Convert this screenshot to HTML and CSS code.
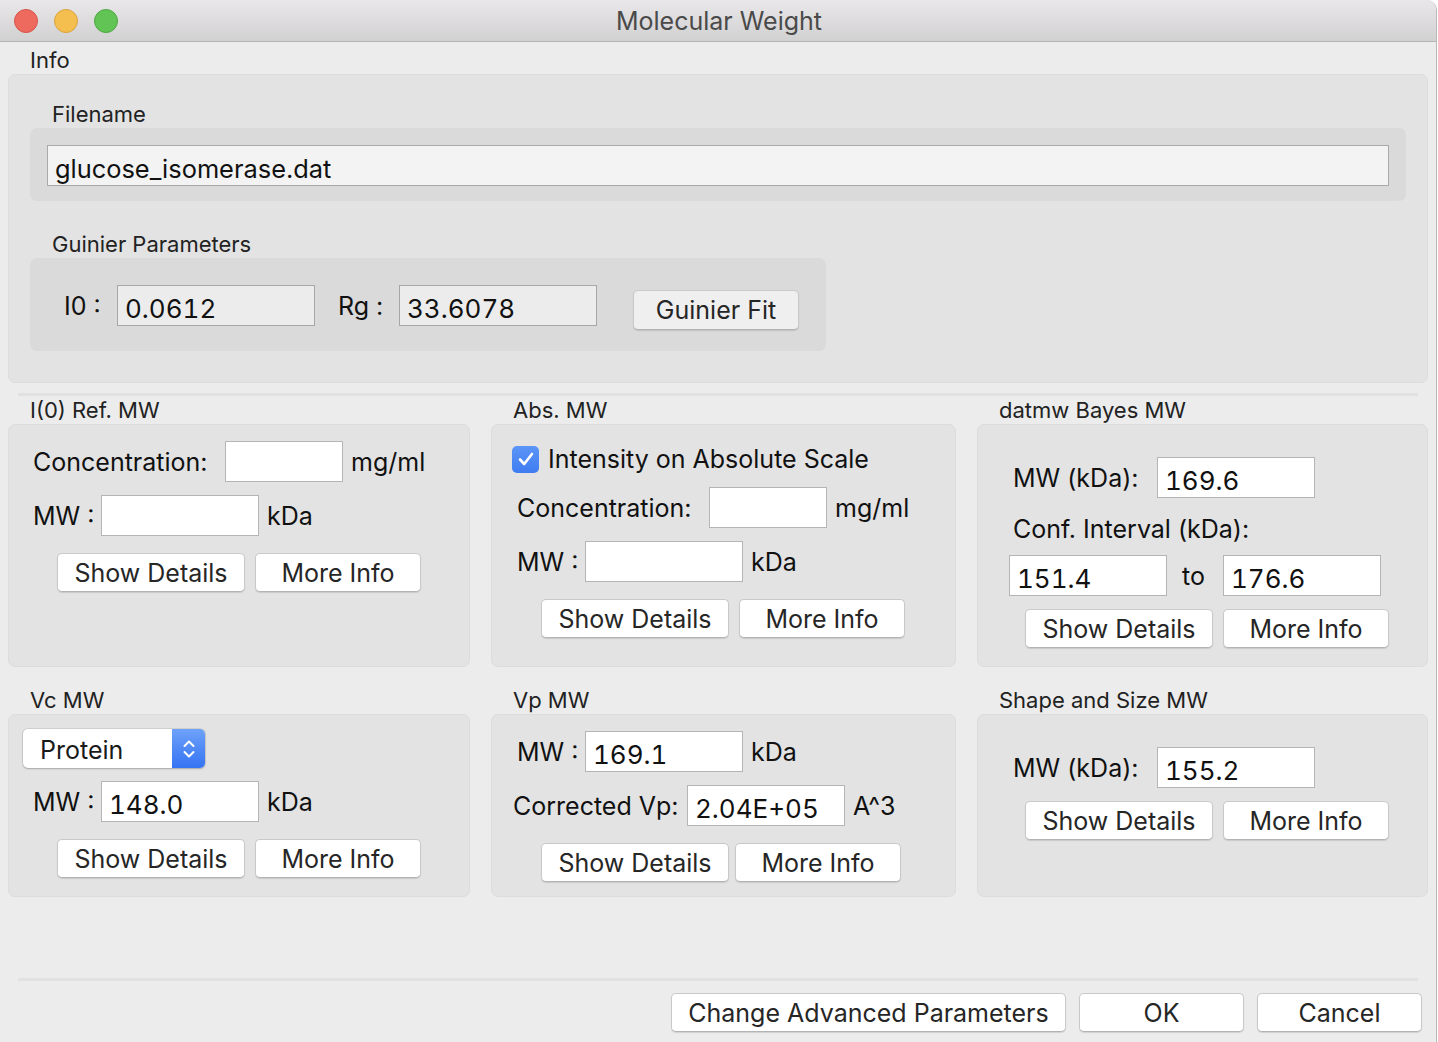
FILE: index.html
```html
<!DOCTYPE html>
<html>
<head>
<meta charset="utf-8">
<title>Molecular Weight</title>
<link rel="stylesheet" href="styles.css">
</head>
<body>
<div class="window">
  <div class="titlebar">
    <div class="lights">
      <span class="light red"></span>
      <span class="light yellow"></span>
      <span class="light green"></span>
    </div>
    <div class="wtitle">Molecular Weight</div>
  </div>
  <div class="content">
    <div class="gtitle top">Info</div>
    <div class="box info">
      <div class="stitle st-file">Filename</div>
      <div class="inner fname">
        <div class="field file">glucose_isomerase.dat</div>
      </div>
      <div class="stitle st-guin">Guinier Parameters</div>
      <div class="inner guinier">
        <span class="lbl w-i0">I0 :</span>
        <div class="field ro">0.0612</div>
        <span class="lbl w-rg">Rg :</span>
        <div class="field ro">33.6078</div>
        <button class="btn fit">Guinier Fit</button>
      </div>
    </div>
    <div class="sep"></div>
    <div class="grid">
      <div class="group">
        <div class="gtitle">I(0) Ref. MW</div>
        <div class="box b-top">
          <div class="row r-ref1"><span class="lbl w-conc">Concentration:</span><div class="field w118"></div><span class="unit">mg/ml</span></div>
          <div class="row r-ref2"><span class="lbl w-mw">MW :</span><div class="field w158"></div><span class="unit">kDa</span></div>
          <div class="row btns r-refb"><button class="btn sd">Show Details</button><button class="btn mi">More Info</button></div>
        </div>
      </div>
      <div class="group">
        <div class="gtitle">Abs. MW</div>
        <div class="box b-top">
          <div class="row r-chk"><span class="check"><svg width="18" height="16" viewBox="0 0 18 16"><path d="M3 8.5 L7.2 13 L15 3" fill="none" stroke="#fff" stroke-width="2.6" stroke-linecap="round" stroke-linejoin="round"/></svg></span><span class="lbl">Intensity on Absolute Scale</span></div>
          <div class="row r-abs1"><span class="lbl w-conc">Concentration:</span><div class="field w118"></div><span class="unit">mg/ml</span></div>
          <div class="row r-abs2"><span class="lbl w-mw">MW :</span><div class="field w158"></div><span class="unit">kDa</span></div>
          <div class="row btns r-absb"><button class="btn sd">Show Details</button><button class="btn mi">More Info</button></div>
        </div>
      </div>
      <div class="group">
        <div class="gtitle">datmw Bayes MW</div>
        <div class="box b-top">
          <div class="row r-bay1"><span class="lbl w-mwk">MW (kDa):</span><div class="field w158">169.6</div></div>
          <div class="row r-bay2"><span class="lbl">Conf. Interval (kDa):</span></div>
          <div class="row r-bay3"><div class="field w158">151.4</div><span class="lbl w-to">to</span><div class="field w158">176.6</div></div>
          <div class="row btns r-bayb"><button class="btn sd">Show Details</button><button class="btn mi">More Info</button></div>
        </div>
      </div>
      <div class="group">
        <div class="gtitle g2">Vc MW</div>
        <div class="box b-bot">
          <div class="row r-pop">
            <div class="popup"><span class="ptext">Protein</span><span class="parrow"><svg width="14" height="24" viewBox="0 0 14 24"><path d="M2.5 9 L7 4.5 L11.5 9 M2.5 15 L7 19.5 L11.5 15" fill="none" stroke="#fff" stroke-width="2" stroke-linecap="round" stroke-linejoin="round"/></svg></span></div>
          </div>
          <div class="row r-vc2"><span class="lbl w-mw">MW :</span><div class="field w158">148.0</div><span class="unit">kDa</span></div>
          <div class="row btns r-vcb"><button class="btn sd">Show Details</button><button class="btn mi">More Info</button></div>
        </div>
      </div>
      <div class="group">
        <div class="gtitle g2">Vp MW</div>
        <div class="box b-bot">
          <div class="row r-vp1"><span class="lbl w-mw">MW :</span><div class="field w158">169.1</div><span class="unit">kDa</span></div>
          <div class="row r-vp2"><span class="lbl w-cvp">Corrected Vp:</span><div class="field w158">2.04E+05</div><span class="unit">A^3</span></div>
          <div class="row btns r-vpb"><button class="btn sd">Show Details</button><button class="btn mi tight">More Info</button></div>
        </div>
      </div>
      <div class="group">
        <div class="gtitle g2">Shape and Size MW</div>
        <div class="box b-bot">
          <div class="row r-bay1"><span class="lbl w-mwk">MW (kDa):</span><div class="field w158">155.2</div></div>
          <div class="row btns r-shb"><button class="btn sd">Show Details</button><button class="btn mi">More Info</button></div>
        </div>
      </div>
    </div>
    <div class="sep sep2"></div>
    <div class="footer">
      <button class="btn adv">Change Advanced Parameters</button>
      <button class="btn ok">OK</button>
      <button class="btn ok">Cancel</button>
    </div>
  </div>
</div>
</body>
</html>
```

FILE: styles.css
```css
* { box-sizing: border-box; }
html, body { margin: 0; padding: 0; background: #ffffff; }
body {
  font-family: Inter, "Liberation Sans", sans-serif;
  color: #1a1a1a;
  width: 1438px;
  height: 1042px;
  overflow: hidden;
}
.window {
  width: 1437px;
  height: 1042px;
  background: #ececec;
  border-right: 1px solid #b9b9b9;
  border-top-right-radius: 10px;
  overflow: hidden;
}
.titlebar {
  height: 42px;
  background: linear-gradient(#e9e7e9, #d2d1d2);
  border-bottom: 1px solid #b4b4b4;
  display: flex;
  align-items: center;
  position: relative;
}
.lights { display: flex; gap: 16px; padding-left: 14px; }
.light {
  width: 24px; height: 24px; border-radius: 50%;
  display: block;
}
.red { background: #ee6a5f; border: 1px solid #d5544b; }
.yellow { background: #f5bf4f; border: 1px solid #d9a33f; }
.green { background: #61c454; border: 1px solid #4ea744; }
.wtitle {
  position: absolute; left: 0; right: 0; top: 0; bottom: 0;
  display: flex; align-items: center; justify-content: center;
  font-size: 25px; color: #4a4a4a;
  pointer-events: none;
  padding-top: 1px;
  padding-left: 2px;
}
.content { display: flex; flex-direction: column; }

.gtitle {
  height: 28px;
  line-height: 28px;
  padding-left: 22px;
  font-size: 22px;
  color: #222;
}
.gtitle.top {
  height: 32px;
  padding-top: 4px;
  padding-left: 30px;
}
.box {
  background: #e3e3e3;
  border: 1px solid #dcdcdc;
  border-radius: 7px;
}
.info {
  margin-left: 8px;
  width: 1420px;
  height: 309px;
  display: flex; flex-direction: column;
}
.stitle {
  font-size: 22px; color: #222;
  height: 28px; line-height: 28px;
  padding-left: 43px;
}
.st-file { margin-top: 25px; }
.st-guin { margin-top: 29px; }
.inner {
  background: #dadada;
  border-radius: 7px;
  margin-left: 21px;
}
.fname {
  width: 1376px;
  height: 73px;
  padding: 17px 0 0 17px;
}
.field {
  height: 41px;
  background: #fff;
  border: 1px solid #b5b5b5;
  font-size: 26px;
  line-height: 31px;
  padding-top: 7px;
  padding-left: 7px;
  color: #111;
  white-space: nowrap;
  font-feature-settings: "tnum" 1;
  flex-shrink: 0;
}
.file {
  width: 1342px;
  background: #f3f3f3;
  border-color: #a9a9a9;
  font-feature-settings: normal;
  font-size: 25.4px;
}
.guinier {
  width: 796px;
  height: 93px;
  display: flex;
  align-items: center;
  padding-left: 34px;
  padding-top: 2px;
}
.ro { width: 198px; background: #ececec; border-color: #a7a7a7; }
.lbl { font-size: 25px; color: #111; white-space: nowrap; flex-shrink: 0; }
.w-i0 { width: 53px; }
.w-rg { width: 61px; margin-left: 23px; }
.btn {
  font-family: inherit;
  font-size: 25px;
  color: #262626;
  background: #fff;
  border: 1px solid #c9c9c9;
  border-bottom-color: #b3b3b3;
  border-radius: 5px;
  box-shadow: 0 1px 1px rgba(0,0,0,0.12);
  height: 39px;
  padding: 0;
  margin: 0;
  display: flex; align-items: center; justify-content: center;
  flex-shrink: 0;
}
.fit { width: 166px; height: 40px; margin-left: 36px; background: #efefef; margin-top: 8px; }

.sep {
  height: 3px;
  background: #e1e1e1;
  margin: 10px 0 0 18px;
  width: 1400px;
}
.grid {
  display: grid;
  grid-template-columns: 462px 465px 451px;
  column-gap: 21px;
  margin-left: 8px;
}
.grid .gtitle.g2 { height: 47px; padding-top: 19px; }
.b-top { height: 243px; display: flex; flex-direction: column; }
.b-bot { height: 183px; display: flex; flex-direction: column; }
.row { display: flex; align-items: center; }
.unit { font-size: 25px; color: #111; margin-left: 8px; }
.w118 { width: 118px; }
.w158 { width: 158px; }
.w-conc { width: 192px; }
.w-mw { width: 68px; }
.w-mwk { width: 144px; }
.w-cvp { width: 174px; }
.w-to { width: 56px; padding-left: 15px; }
.btns { gap: 10px; }
.sd { width: 188px; }
.mi { width: 166px; }
.tight { margin-left: -4px; }

/* I(0) Ref */
.r-ref1 { margin: 16px 0 0 24px; }
.r-ref2 { margin: 13px 0 0 24px; }
.r-refb { margin: 17px 0 0 48px; }
/* Abs */
.r-chk { margin: 20px 0 0 20px; height: 28px; }
.check {
  width: 27px; height: 27px; border-radius: 5px;
  background: linear-gradient(#5b95f7, #3f7cf1);
  display: flex; align-items: center; justify-content: center;
  margin-right: 9px;
}
.r-abs1 { margin: 14px 0 0 25px; }
.r-abs2 { margin: 13px 0 0 25px; }
.r-absb { margin: 17px 0 0 49px; }
/* Bayes */
.r-bay1 { margin: 32px 0 0 35px; }
.r-bay2 { margin: 10px 0 0 35px; height: 41px; }
.r-bay3 { margin: 6px 0 0 31px; }
.r-bayb { margin: 13px 0 0 47px; }
/* Vc */
.r-pop { margin: 14px 0 0 14px; }
.popup {
  width: 182px; height: 39px;
  background: #fff;
  border-radius: 5px;
  box-shadow: 0 0 0 1px rgba(0,0,0,0.08), 0 1px 2px rgba(0,0,0,0.2);
  display: flex;
  overflow: hidden;
}
.ptext { flex: 1; font-size: 25px; color: #1a1a1a; line-height: 39px; padding-left: 17px; padding-top: 2px; }
.parrow {
  width: 33px;
  background: linear-gradient(#6fa2f9, #3473f3);
  display: flex; align-items: center; justify-content: center;
}
.r-vc2 { margin: 13px 0 0 24px; }
.r-vcb { margin: 17px 0 0 48px; }
/* Vp */
.r-vp1 { margin: 16px 0 0 25px; }
.r-vp2 { margin: 13px 0 0 21px; }
.r-vpb { margin: 17px 0 0 49px; }
/* Shape */
.r-shb { margin: 13px 0 0 47px; }

.sep2 { margin-top: 81px; }
.footer {
  display: flex;
  justify-content: flex-end;
  gap: 13px;
  padding-right: 14px;
  margin-top: 12px;
}
.adv { width: 395px; }
.ok { width: 165px; }
```
